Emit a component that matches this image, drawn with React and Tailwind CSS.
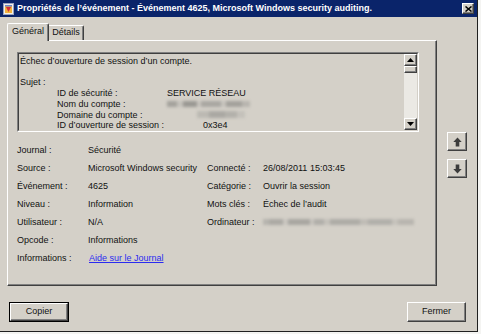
import React from "react";

const raised =
  "border border-t-white border-l-white border-r-[#404040] border-b-[#404040] shadow-[inset_-1px_-1px_0_#808080] bg-[#d4d0c8]";

function UpTri() {
  return (
    <svg width="7" height="4" viewBox="0 0 7 4">
      <polygon points="3.5,0 7,4 0,4" fill="#000" />
    </svg>
  );
}
function DownTri() {
  return (
    <svg width="7" height="4" viewBox="0 0 7 4">
      <polygon points="0,0 7,0 3.5,4" fill="#000" />
    </svg>
  );
}

function BlockArrow({ down }) {
  return (
    <svg width="9" height="10" viewBox="0 0 9 10" className={down ? "rotate-180" : ""}>
      <polygon points="4.5,0.5 8.7,5 6.3,5 6.3,9.5 2.7,9.5 2.7,5 0.3,5" fill="#3c3c3c" />
    </svg>
  );
}

function Blur({ segs }) {
  return (
    <div className="flex items-center h-[8px] blur-[1.8px]">
      {segs.map((c, i) => (
        <div key={i} className={c} />
      ))}
    </div>
  );
}

const nomSegs = [
  "w-[10px] h-[6px] bg-[#a4a29d]",
  "w-[6px] h-[6px] bg-[#c4c1bb]",
  "w-[14px] h-[6px] bg-[#9a9893]",
  "w-[4px] h-[6px] bg-[#c8c5bf]",
  "w-[20px] h-[6px] bg-[#a9a7a2]",
  "w-[5px] h-[6px] bg-[#c6c3bd]",
  "w-[16px] h-[6px] bg-[#a3a19c]",
  "w-[8px] h-[6px] bg-[#b8b5af]",
];
const domSegs = [
  "w-[12px] h-[7px] bg-[#bcb9b3]",
  "w-[16px] h-[7px] bg-[#aaa8a3]",
  "w-[12px] h-[7px] bg-[#b3b1ab]",
  "w-[8px] h-[7px] bg-[#c4c1bb]",
];
const ordSegs = [
  "w-[6px] h-[6px] bg-[#b6b4ae]",
  "w-[14px] h-[6px] bg-[#aba9a4]",
  "w-[5px] h-[6px] bg-[#c9c6c0]",
  "w-[22px] h-[6px] bg-[#a8a6a1]",
  "w-[4px] h-[6px] bg-[#c6c3bd]",
  "w-[10px] h-[6px] bg-[#b0aea9]",
  "w-[6px] h-[6px] bg-[#c4c1bb]",
  "w-[30px] h-[6px] bg-[#adaba6]",
  "w-[8px] h-[6px] bg-[#bfbcb6]",
  "w-[24px] h-[6px] bg-[#b1afaa]",
  "w-[6px] h-[6px] bg-[#c5c2bc]",
  "w-[16px] h-[6px] bg-[#b8b5af]",
];

export default function App() {
  return (
    <div className="w-[481px] h-[334px] flex flex-col bg-[#f4f4f2] overflow-hidden font-['Liberation_Sans',Arial,sans-serif] text-[9px] text-[#111]">
      <div className="w-[478px] h-[332px] flex flex-col bg-[#d4d0c8] border-r border-b border-[#202020]">
        {/* Title bar */}
        <div className="h-[17px] bg-[#0a246a] flex items-center pl-[3px] pr-[3px] shrink-0">
          <svg width="11" height="12" viewBox="0 0 11 12" className="shrink-0">
            <rect x="0.5" y="0.5" width="10" height="11" fill="#f3f0e8" stroke="#9aa4c0" />
            <rect x="2" y="2" width="7" height="8" fill="#f2b33d" />
            <path d="M3 4 L8 4 L5.5 9 Z" fill="#d6303a" />
            <rect x="2" y="2" width="7" height="1.5" fill="#6b84c8" />
          </svg>
          <span className="ml-[3px] text-white font-bold whitespace-nowrap leading-none">
            Propriétés de l’événement - Événement 4625, Microsoft Windows security auditing.
          </span>
          <div className="flex-1" />
          <div className={`w-[12px] h-[11px] flex items-center justify-center ${raised}`}>
            <svg width="7" height="6" viewBox="0 0 7 6">
              <path d="M0.5 0.5 L6.5 5.5 M6.5 0.5 L0.5 5.5" stroke="#000" strokeWidth="1.5" />
            </svg>
          </div>
        </div>

        {/* Body */}
        <div className="flex flex-col pl-[7px] pt-[6px]">
          <div className="flex">
            {/* Tabs + panel */}
            <div className="w-[430px] flex flex-col">
              <div className="h-[17px] flex items-end">
                <div className="relative z-10 -mb-px h-[18px] w-[42px] bg-[#d4d0c8] border-l border-t border-white border-r border-r-[#404040] shadow-[inset_-1px_0_0_#808080] rounded-tl-[2px] rounded-tr-[2px] flex items-center justify-center pb-[2px]">
                  Général
                </div>
                <div className="h-[15px] w-[35px] bg-[#d4d0c8] border-t border-white border-r border-r-[#404040] shadow-[inset_-1px_0_0_#808080] rounded-tr-[2px] flex items-center justify-center">
                  Détails
                </div>
              </div>
              <div className="h-[246px] border-l border-t border-white border-r border-b border-r-[#404040] border-b-[#404040] shadow-[inset_-1px_-1px_0_#808080] pl-[9px] pt-[11px] flex flex-col">
                {/* Text box */}
                <div className="w-[402px] h-[80px] border border-t-[#808080] border-l-[#808080] border-r-white border-b-white">
                  <div className="w-full h-full border border-t-[#404040] border-l-[#404040] border-r-[#d4d0c8] border-b-[#d4d0c8] flex">
                    <div className="flex-1 overflow-hidden pl-[1px] pt-[2px] leading-[10.7px] whitespace-nowrap">
                      <div>Échec d’ouverture de session d’un compte.</div>
                      <div>&nbsp;</div>
                      <div>Sujet :</div>
                      <div className="flex">
                        <span className="ml-[37px] w-[110px]">ID de sécurité :</span>
                        <span>SERVICE RÉSEAU</span>
                      </div>
                      <div className="flex items-center">
                        <span className="ml-[37px] w-[110px]">Nom du compte :</span>
                        <Blur segs={nomSegs} />
                      </div>
                      <div className="flex items-center">
                        <span className="ml-[37px] w-[140px]">Domaine du compte :</span>
                        <Blur segs={domSegs} />
                      </div>
                      <div className="flex">
                        <span className="ml-[37px] w-[146px]">ID d’ouverture de session :</span>
                        <span>0x3e4</span>
                      </div>
                    </div>
                    {/* Scrollbar */}
                    <div className="w-[13px] flex flex-col bg-[#ebe9e4]">
                      <div className={`h-[12px] flex items-center justify-center ${raised}`}>
                        <UpTri />
                      </div>
                      <div className={`h-[7px] ${raised}`} />
                      <div className="flex-1" />
                      <div className={`h-[12px] flex items-center justify-center ${raised}`}>
                        <DownTri />
                      </div>
                    </div>
                  </div>
                </div>

                {/* Info grid */}
                <div className="mt-[9px] grid grid-cols-[70px_120px_56px_1fr] auto-rows-[18px] items-center leading-none whitespace-nowrap">
                  <div>Journal :</div>
                  <div className="pl-[1px]">Sécurité</div>
                  <div />
                  <div />

                  <div>Source :</div>
                  <div className="pl-[1px]">Microsoft Windows security</div>
                  <div>Connecté :</div>
                  <div>26/08/2011 15:03:45</div>

                  <div>Événement :</div>
                  <div className="pl-[1px]">4625</div>
                  <div>Catégorie :</div>
                  <div>Ouvrir la session</div>

                  <div>Niveau :</div>
                  <div className="pl-[1px]">Information</div>
                  <div>Mots clés :</div>
                  <div>Échec de l’audit</div>

                  <div>Utilisateur :</div>
                  <div className="pl-[1px]">N/A</div>
                  <div>Ordinateur :</div>
                  <div><Blur segs={ordSegs} /></div>

                  <div>Opcode :</div>
                  <div className="pl-[1px]">Informations</div>
                  <div />
                  <div />

                  <div>Informations :</div>
                  <div className="pl-[2px]">
                    <span className="text-[#2b2bf0] underline">Aide sur le Journal</span>
                  </div>
                  <div />
                  <div />
                </div>
              </div>
            </div>

            {/* Up/down buttons */}
            <div className="ml-[10px] pt-[109px] flex flex-col gap-[8px]">
              <div className={`w-[20px] h-[19px] flex items-center justify-center ${raised}`}>
                <BlockArrow />
              </div>
              <div className={`w-[20px] h-[19px] flex items-center justify-center ${raised}`}>
                <BlockArrow down />
              </div>
            </div>
          </div>

          {/* Bottom buttons */}
          <div className="mt-[16px] flex justify-between pl-[2px] pr-[11px]">
            <div className="w-[60px] h-[20px] border border-black">
              <div className={`w-full h-full flex items-center justify-center ${raised}`}>Copier</div>
            </div>
            <div className={`w-[59px] h-[20px] flex items-center justify-center ${raised}`}>Fermer</div>
          </div>
        </div>
      </div>
    </div>
  );
}
